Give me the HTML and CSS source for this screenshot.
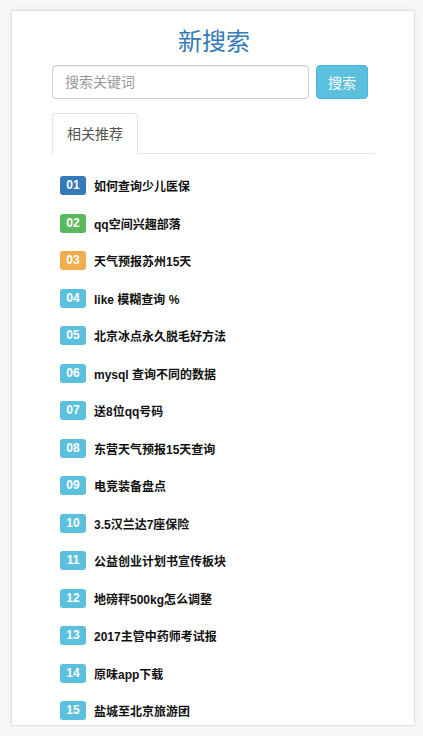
FILE: index.html
```html
<!DOCTYPE html>
<html lang="zh-CN">
<head>
<meta charset="utf-8">
<title>新搜索</title>
<link rel="stylesheet" href="styles.css">
</head>
<body>
<div class="card">
  <h1 class="title">新搜索</h1>
  <form class="search">
    <input class="search-input" type="text" placeholder="搜索关键词">
    <button class="search-btn" type="button">搜索</button>
  </form>
  <ul class="tabs">
    <li class="tab active">相关推荐</li>
  </ul>
  <ul class="list">
    <li class="item"><span class="badge b-primary">01</span><span class="text">如何查询少儿医保</span></li>
    <li class="item"><span class="badge b-success">02</span><span class="text">qq空间兴趣部落</span></li>
    <li class="item"><span class="badge b-warning">03</span><span class="text">天气预报苏州15天</span></li>
    <li class="item"><span class="badge">04</span><span class="text">like 模糊查询 %</span></li>
    <li class="item"><span class="badge">05</span><span class="text">北京冰点永久脱毛好方法</span></li>
    <li class="item"><span class="badge">06</span><span class="text">mysql 查询不同的数据</span></li>
    <li class="item"><span class="badge">07</span><span class="text">送8位qq号码</span></li>
    <li class="item"><span class="badge">08</span><span class="text">东营天气预报15天查询</span></li>
    <li class="item"><span class="badge">09</span><span class="text">电竞装备盘点</span></li>
    <li class="item"><span class="badge">10</span><span class="text">3.5汉兰达7座保险</span></li>
    <li class="item"><span class="badge">11</span><span class="text">公益创业计划书宣传板块</span></li>
    <li class="item"><span class="badge">12</span><span class="text">地磅秤500kg怎么调整</span></li>
    <li class="item"><span class="badge">13</span><span class="text">2017主管中药师考试报</span></li>
    <li class="item"><span class="badge">14</span><span class="text">原味app下载</span></li>
    <li class="item"><span class="badge">15</span><span class="text">盐城至北京旅游团</span></li>
  </ul>
</div>
</body>
</html>
```

FILE: styles.css
```css
* { box-sizing: border-box; }
html, body {
  margin: 0;
  padding: 0;
  background: #f7f7f7;
  font-family: "Liberation Sans", "Noto Sans CJK SC", sans-serif;
  font-size: 14px;
  color: #333;
}
.card {
  margin: 10px 0 0 11px;
  width: 404px;
  height: 716px;
  background: #fff;
  border: 1px solid #e2e2e2;
  box-shadow: 0 0 8px rgba(0, 0, 0, 0.05);
  overflow: hidden;
  padding: 18px 39px 0 40px;
}
.title {
  margin: 0;
  text-align: center;
  font-size: 24px;
  line-height: 26px;
  font-weight: normal;
  color: #337ab7;
  height: 26px;
  padding-left: 1px;
}
.search {
  display: flex;
  margin-top: 10px;
  gap: 7px;
}
.search-input {
  width: 257px;
  height: 34px;
  padding: 6px 12px;
  border: 1px solid #ccc;
  border-radius: 4px;
  box-shadow: inset 0 1px 1px rgba(0, 0, 0, 0.075);
  font-family: inherit;
  font-size: 14px;
  color: #555;
  outline: none;
}
.search-input::placeholder { color: #999; }
.search-btn {
  width: 52px;
  height: 34px;
  padding: 0;
  background: #5bc0de;
  border: 1px solid #46b8da;
  border-radius: 4px;
  color: #fff;
  font-family: inherit;
  font-size: 14px;
}
.tabs {
  list-style: none;
  margin: 14px 0 0;
  padding: 0;
  display: flex;
  border-bottom: 1px solid #e5e5e5;
}
.tab {
  margin-bottom: -1px;
  padding: 10px 14px 9px;
  line-height: 20px;
  border: 1px solid #e2e2e2;
  border-bottom-color: #fff;
  border-radius: 4px 4px 0 0;
  background: #fff;
  color: #555;
}
.list {
  list-style: none;
  margin: 13px 0 0;
  padding: 0 0 0 8px;
}
.item {
  display: flex;
  align-items: center;
  height: 37.5px;
  gap: 8px;
}
.badge {
  display: inline-block;
  width: 26px;
  height: 19px;
  line-height: 19px;
  text-align: center;
  border-radius: 3px;
  background: #5bc0de;
  color: #fff;
  font-size: 12px;
  font-weight: bold;
}
.b-primary { background: #337ab7; }
.b-success { background: #5cb85c; }
.b-warning { background: #f0ad4e; }
.text {
  font-size: 12px;
  font-weight: bold;
  color: #111;
}
```
